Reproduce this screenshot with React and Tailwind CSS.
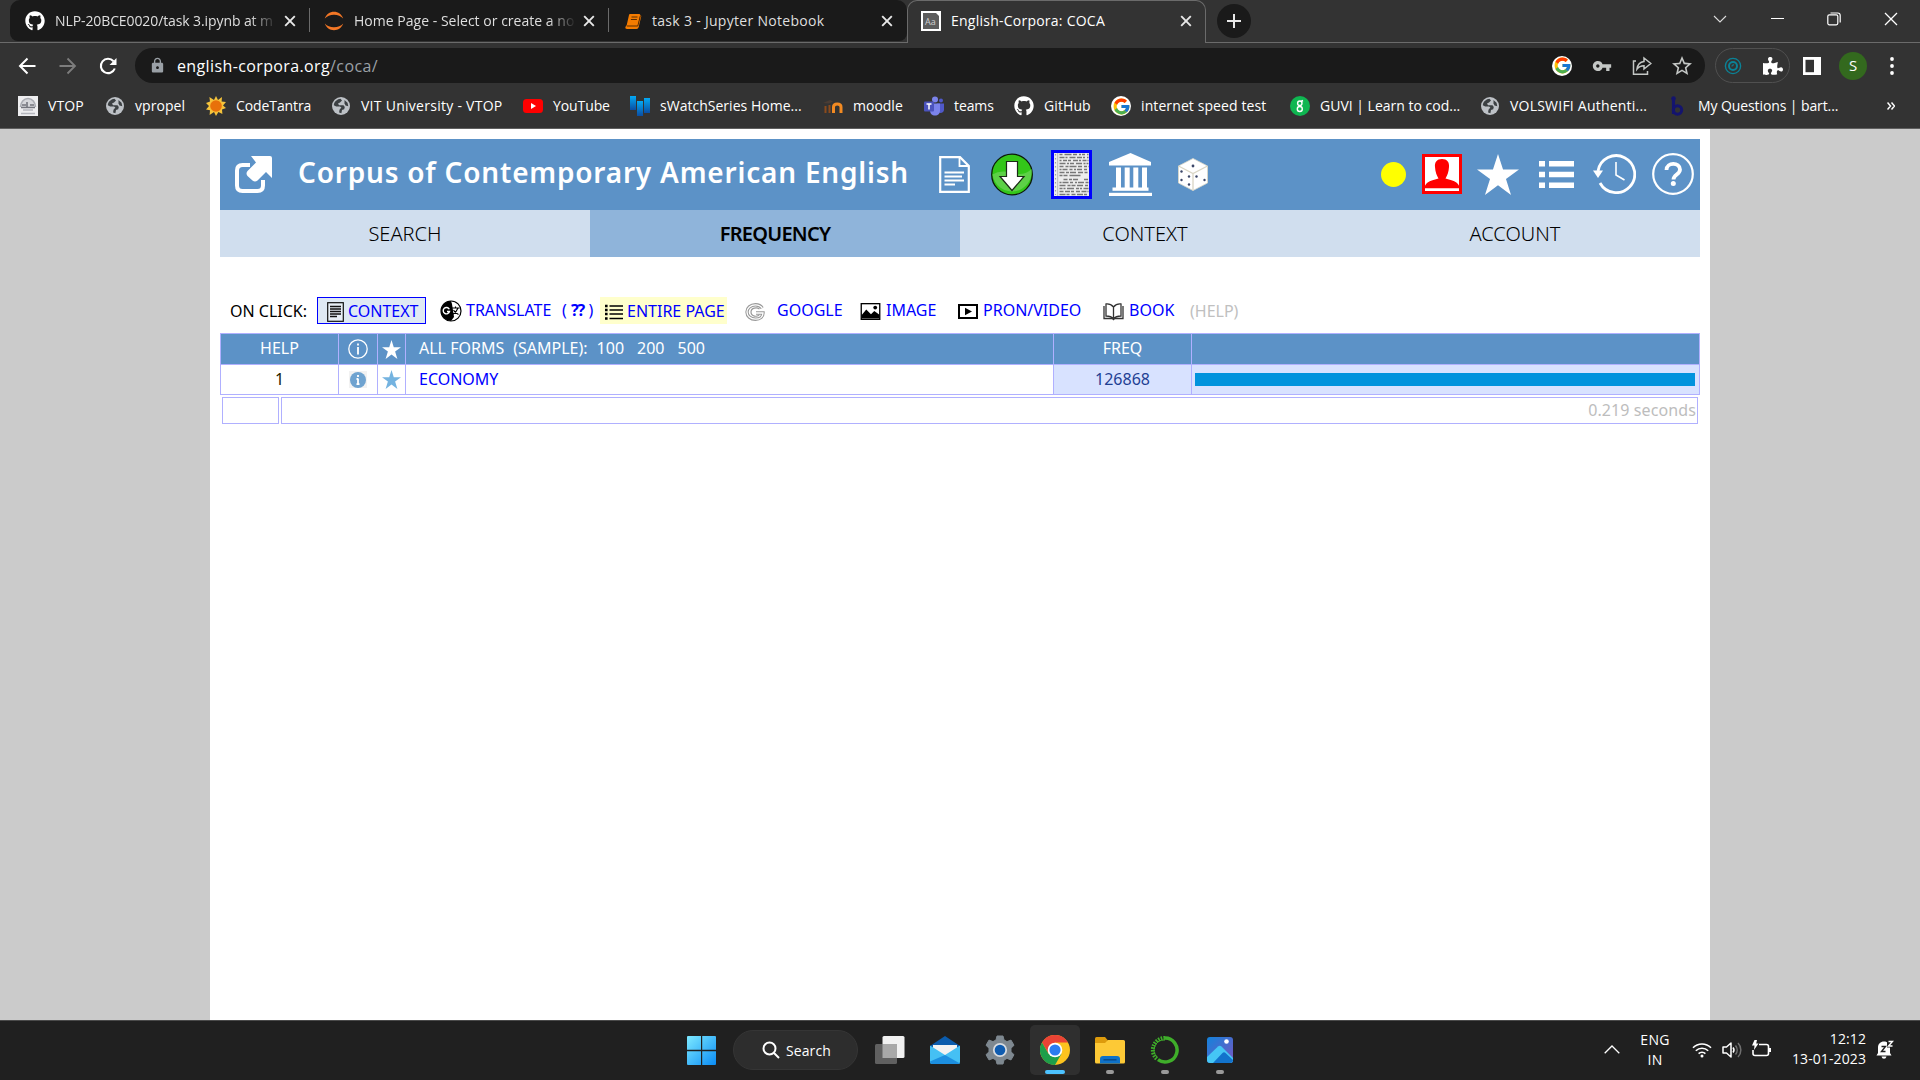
import React from 'react';
import { FaGithub, FaPuzzlePiece } from 'react-icons/fa';
import { FcGoogle } from 'react-icons/fc';
import { MdVpnKey, MdLock, MdStarBorder } from 'react-icons/md';

const STAR = 'M50 0 L62 38 L100 38 L69 61 L81 100 L50 76 L19 100 L31 61 L0 38 L38 38 Z';

function Globe() {
  return (
    <svg viewBox="0 0 20 20" className="w-5 h-5">
      <circle cx="10" cy="10" r="9" fill="#bdc1c6" />
      <path d="M2.800 9.200C3.200 5.500 6.300 3 9.500 2.800L11 4.500 9 6.500 7 7.500l1 1.700h4.500l1.300 1.800-.6 2.200-2.200.8-.6 3.200-2.300-.6.4-2.800 1.900-2.200-1.400-1.200H5.200Z" fill="#3c4043" />
      <path d="M13.500 4l3 2.800.8 3.400-2.800-.7-1-2.200Z" fill="#3c4043" />
    </svg>
  );
}

function GoogleBadge() {
  return (
    <span className="flex w-5 h-5 items-center justify-center rounded-full bg-white">
      <FcGoogle size={19} />
    </span>
  );
}

function CloseX({ className = '' }) {
  return (
    <svg viewBox="0 0 12 12" className={'w-3 h-3 shrink-0 ' + className} stroke="#e8e8e8" strokeWidth="1.9">
      <path d="M1.200 1.200L10.800 10.800M10.800 1.200L1.200 10.800" />
    </svg>
  );
}

function NotebookIcon() {
  return (
    <svg viewBox="0 0 20 20" className="w-5 h-5 shrink-0">
      <path d="M7 3h9q1.500 0 1.200 1.300L14.800 15H3.500L6 4Q6.200 3 7 3Z" fill="#f57c00" />
      <path d="M3.500 14.500h11.300l2.700-10.500.8 1-2.600 11Q15.300 18 13.500 18H4Q2 18 2.300 16Z" fill="#f57c00" />
      <path d="M8.500 6h6M7.900 8.500h6M3.800 15h11l2.600-10.200" stroke="#5a2c00" strokeWidth="1" fill="none" />
    </svg>
  );
}

function TabStrip() {
  return (
    <div className="flex h-[43px] bg-[#333333]">
      <div className="flex h-full w-[907px] shrink-0 border-b border-[#6b6b6b]">
        <div className="ml-[10px] flex h-[41px] w-[897px] rounded-t-[10px] rounded-b-[8px] bg-[#1a1a1a]">
          <div className="flex w-[299px] shrink-0 items-center border-r border-transparent">
            <FaGithub size={20} color="#fff" className="ml-[15px] shrink-0" />
            <span className="ml-[10px] w-[222px] shrink-0 overflow-hidden whitespace-nowrap text-[14px] tracking-[-0.1px] text-[#dfdfdf] [mask-image:linear-gradient(to_right,black_195px,transparent_222px)]">
              NLP-20BCE0020/task 3.ipynb at m
            </span>
            <CloseX className="ml-[7px]" />
          </div>
          <div className="mt-2 h-6 w-px shrink-0 bg-[#6b6b6b]" />
          <div className="flex w-[298px] shrink-0 items-center">
            <svg viewBox="0 0 20 20" className="ml-[14px] h-5 w-5 shrink-0">
              <path d="M.8 7.500C2.200 3.300 5.800.8 10 .8s7.800 2.500 9.200 6.700C17 5 13.800 3.700 10 3.700S3 5 .8 7.500Z" fill="#f37726" />
              <path d="M.8 12.500c1.400 4.200 5 6.700 9.200 6.700s7.800-2.500 9.200-6.700c-2.200 2.500-5.400 3.800-9.200 3.800S3 15 .8 12.500Z" fill="#f37726" />
            </svg>
            <span className="ml-[10px] w-[222px] shrink-0 overflow-hidden whitespace-nowrap text-[14px] tracking-[0.02px] text-[#dfdfdf] [mask-image:linear-gradient(to_right,black_195px,transparent_222px)]">
              Home Page - Select or create a no
            </span>
            <CloseX className="ml-[7px]" />
          </div>
          <div className="mt-2 h-6 w-px shrink-0 bg-[#6b6b6b]" />
          <div className="flex w-[297px] shrink-0 items-center">
            <span className="ml-[14px]"><NotebookIcon /></span>
            <span className="ml-[9px] w-[222px] whitespace-nowrap text-[14px] tracking-[0.3px] text-[#dfdfdf]">task 3 - Jupyter Notebook</span>
            <CloseX className="ml-[7px]" />
          </div>
        </div>
      </div>
      <div className="flex h-[43px] w-[299px] shrink-0 items-center rounded-t-[10px] border border-b-0 border-[#6b6b6b] pb-[3px]">
        <svg viewBox="0 0 20 20" className="ml-[13px] h-5 w-5 shrink-0">
          <rect width="20" height="20" fill="#fff" />
          <path d="M2 2h13l3 3v13H2Z" fill="#5c5c5c" />
          <text x="4" y="14" fontSize="9" fill="#d0d0d0">Aa</text>
        </svg>
        <span className="ml-[10px] w-[229px] whitespace-nowrap text-[14px] tracking-[0.24px] text-white">English-Corpora: COCA</span>
        <CloseX />
      </div>
      <div className="flex h-full grow border-b border-[#6b6b6b]">
        <div className="ml-[11px] mt-[4px] flex h-[34px] w-[34px] items-center justify-center rounded-full bg-[#1a1a1a]">
          <svg viewBox="0 0 16 16" className="h-4 w-4" stroke="#e8e8e8" strokeWidth="2">
            <path d="M8 1v14M1 8h14" />
          </svg>
        </div>
        <svg viewBox="0 0 14 8" className="ml-[462px] mt-[15px] h-2 w-[14px]" fill="none" stroke="#ddd" strokeWidth="1.100">
          <path d="M1 1l6 6 6-6" />
        </svg>
        <div className="ml-[44px] mt-[18px] h-px w-[13px] bg-white" />
        <svg viewBox="0 0 14 14" className="ml-[43px] mt-[12px] h-[14px] w-[14px]" fill="none" stroke="#fff" strokeWidth="1.200">
          <rect x=".8" y="2.800" width="10" height="10" rx="1.500" />
          <path d="M3.500 1h7.200c1.500 0 2.500 1 2.500 2.500v7" />
        </svg>
        <svg viewBox="0 0 14 14" className="ml-[43px] mt-[12px] h-[14px] w-[14px]" stroke="#fff" strokeWidth="1.300">
          <path d="M1 1l12 12M13 1L1 13" />
        </svg>
      </div>
    </div>
  );
}

function Toolbar() {
  return (
    <div className="flex h-[45px] items-center bg-[#333333]">
      <svg viewBox="0 0 18 18" className="ml-[18px] h-[18px] w-[18px]" fill="none" stroke="#fff" strokeWidth="2">
        <path d="M17.500 9H2M9.500 1.500L2 9l7.500 7.500" />
      </svg>
      <svg viewBox="0 0 18 18" className="ml-[23px] h-[18px] w-[18px]" fill="none" stroke="#7d7d7d" strokeWidth="1.800">
        <path d="M.5 9H16M8.500 1.500L16 9l-7.500 7.500" />
      </svg>
      <svg viewBox="0 0 18 18" className="ml-[22px] h-[18px] w-[18px]" fill="none" stroke="#fff" strokeWidth="2.100">
        <path d="M15.800 11.500A7.200 7.200 0 1 1 14.500 4.200" />
        <path d="M17.500 1v7h-7Z" fill="#fff" stroke="none" />
      </svg>
      <div className="ml-[18px] flex h-[35px] w-[1570px] items-center rounded-full bg-[#1a1a1a]">
        <MdLock size={17} color="#9aa0a6" className="ml-[14px]" />
        <div className="ml-[11px] w-[1375px] whitespace-nowrap text-[16px] tracking-[0.38px] text-white">
          english-corpora.org<span className="text-[#9aa0a6]">/coca/</span>
        </div>
        <GoogleBadge />
        <MdVpnKey size={20} color="#c4c7c5" className="ml-[20px]" />
        <svg viewBox="0 0 20 20" className="ml-[20px] h-5 w-5" fill="none" stroke="#c4c7c5" strokeWidth="1.500">
          <path d="M4 5H1.500v13.200h14V15" />
          <path d="M12 2l6.800 5.500L12 13v-3.300c-3 0-5.300 1-7 3.300.5-4 3-7 7-7.500Z" />
        </svg>
        <MdStarBorder size={24} color="#c4c7c5" className="ml-[18px]" />
      </div>
      <div className="ml-[10px] flex h-[35px] w-[75px] items-center rounded-full border border-[#505050]">
        <svg viewBox="0 0 18 18" className="ml-[8px] h-[18px] w-[18px]" fill="none" stroke="#0b8296" strokeWidth="1.400">
          <circle cx="9" cy="9" r="7.600" />
          <circle cx="9" cy="9" r="4" strokeWidth="2" />
          <path d="M8 9.500q0-2 2-1.500" strokeWidth="1.200" />
        </svg>
        <FaPuzzlePiece size={20} color="#fff" className="ml-[21px]" />
      </div>
      <svg viewBox="0 0 18 18" className="ml-[13px] h-[18px] w-[18px]">
        <rect width="18" height="18" fill="#fff" />
        <rect x="2.500" y="2.800" width="8.500" height="12.400" fill="#333" />
      </svg>
      <div className="ml-[18px] flex h-7 w-7 items-center justify-center rounded-full bg-[#33691e] text-[15px] text-white">S</div>
      <svg viewBox="0 0 4 18" className="ml-[23px] h-[18px] w-1" fill="#fff">
        <circle cx="2" cy="2" r="1.900" />
        <circle cx="2" cy="9" r="1.900" />
        <circle cx="2" cy="16" r="1.900" />
      </svg>
    </div>
  );
}

function Mark({ icon, label, className }) {
  return (
    <div className={'flex shrink-0 items-center ' + className}>
      <span className="flex h-5 w-5 shrink-0 items-center justify-center">{icon}</span>
      <span className="ml-[10px] mt-[-2px] whitespace-nowrap">{label}</span>
    </div>
  );
}

function BookmarksBar() {
  return (
    <div className="flex h-[41px] items-center border-b border-[#5f5f5f] bg-[#333333] pb-[4px] pl-[18px] text-[14px] tracking-[-0.1px] text-white">
      <Mark className="w-[87px] tracking-[0.1px]" label="VTOP" icon={
        <svg viewBox="0 0 20 20" className="h-5 w-5">
          <rect width="20" height="20" fill="#eeeef0" />
          <path d="M2.500 11A7.500 8.500 0 0 1 17.500 11" fill="#d6d7db" stroke="#aaacb3" strokeWidth="1.600" />
          <path d="M3 11.500h14M4 9h4M9 6v5M12 9h4" stroke="#74767e" strokeWidth="1.600" />
          <path d="M5 14h10M3 17.500h14" stroke="#b5b6bd" strokeWidth="1.600" />
        </svg>} />
      <Mark className="w-[101px] tracking-[0.05px]" label="vpropel" icon={<Globe />} />
      <Mark className="w-[125px]" label="CodeTantra" icon={
        <svg viewBox="0 0 20 20" className="h-5 w-5">
          <path d="M10 0l2 4 4-3-.4 4.600L20 6l-3 3.500 3 2.500-4 1.600.4 4.400-4-2L10 20l-2-4-4.400 3 .4-4.800-4-.8L3 10 0 7l4-1.400L3.400 1 8 4Z" fill="#f5c33b" />
          <circle cx="10" cy="10" r="5.800" fill="#e8710a" />
        </svg>} />
      <Mark className="w-[192px] tracking-[0.27px]" label="VIT University - VTOP" icon={<Globe />} />
      <Mark className="w-[107px]" label="YouTube" icon={
        <svg viewBox="0 0 20 20" className="h-5 w-5">
          <rect y="3" width="20" height="14" rx="3.500" fill="#f00" />
          <path d="M8 7l5 3-5 3Z" fill="#fff" />
        </svg>} />
      <Mark className="w-[193px] tracking-[0.02px]" label="sWatchSeries Home..." icon={
        <svg viewBox="0 0 20 20" className="h-5 w-5">
          <defs>
            <linearGradient id="bars" x1="0" y1="0" x2="0" y2="1">
              <stop offset="0" stopColor="#03a9f4" />
              <stop offset="1" stopColor="#0a4da3" />
            </linearGradient>
          </defs>
          <rect width="6" height="14" fill="url(#bars)" />
          <rect x="7" y="5" width="6" height="15" fill="url(#bars)" />
          <rect x="14" y="2" width="6" height="15" fill="url(#bars)" />
        </svg>} />
      <Mark className="w-[101px] tracking-[0px]" label="moodle" icon={
        <svg viewBox="0 0 20 20" className="h-5 w-5" fill="none">
          <path d="M2.500 17V10M6.500 17V9" stroke="#8a4a1c" strokeWidth="2" />
          <path d="M0 7l7-3 3 1.500-4 2Z" fill="#4a3c34" />
          <path d="M10.500 17v-6c0-4 7.500-4 7.500 0v6" stroke="#f28a22" strokeWidth="3" />
        </svg>} />
      <Mark className="w-[90px]" label="teams" icon={
        <svg viewBox="0 0 20 20" className="h-5 w-5">
          <circle cx="11" cy="3.500" r="3" fill="#7b83eb" />
          <circle cx="17" cy="4.500" r="2" fill="#5059c9" />
          <path d="M13 7.500h7v6c0 2-1.500 3.500-3.500 3.500S13 16 13 13Z" fill="#5059c9" />
          <path d="M6 7.500h10v7c0 3-2 5-5 5s-5-2-5-5Z" fill="#7b83eb" />
          <rect y="5.500" width="10" height="10" rx="1" fill="#4b53bc" />
          <path d="M2.500 8h5M5 8v5.500" stroke="#fff" strokeWidth="1.500" />
        </svg>} />
      <Mark className="w-[97px] tracking-[0.1px]" label="GitHub" icon={<FaGithub size={20} color="#fff" />} />
      <Mark className="w-[179px] tracking-[0.1px]" label="internet speed test" icon={<GoogleBadge />} />
      <Mark className="w-[190px] tracking-[0px]" label="GUVI | Learn to cod..." icon={
        <svg viewBox="0 0 20 20" className="h-5 w-5" fill="none">
          <circle cx="10" cy="10" r="10" fill="#0fb651" />
          <circle cx="9.800" cy="7.200" r="2.200" stroke="#fff" strokeWidth="1.400" />
          <circle cx="9.800" cy="13" r="2.500" stroke="#fff" strokeWidth="1.400" />
          <path d="M11 5.500l2-1" stroke="#fff" strokeWidth="1.400" />
        </svg>} />
      <Mark className="w-[188px] tracking-[0.22px]" label="VOLSWIFI Authenti..." icon={<Globe />} />
      <Mark className="w-[215px]" label="My Questions | bart..." icon={
        <svg viewBox="0 0 20 20" className="h-5 w-5" fill="none">
          <circle cx="5.500" cy="2.500" r="2.300" fill="#14146e" />
          <path d="M5.500 3v15" stroke="#14146e" strokeWidth="3.200" />
          <circle cx="9.500" cy="14" r="4.200" stroke="#14146e" strokeWidth="3" />
        </svg>} />
      <svg viewBox="0 0 8 8" className="ml-[4px] h-2 w-2" fill="none" stroke="#fff" strokeWidth="1.500">
        <path d="M.5.5L3.500 4l-3 3.500M4.500.5L7.500 4l-3 3.500" />
      </svg>
    </div>
  );
}

function NewspaperIcon() {
  const rows = [
    [1, '3 2 7 1.500 4 2 2 1'],
    [4, '5 1 2 2 6 1.500'],
    [7, '2 1.500 4 1 3 2 5 1'],
    [10, '6 1.500 2 1 4 2'],
    [13, '4 2 3 1 7 1.500'],
    [16, '2 1 5 2 3 1.500'],
    [19, '5 1.500 3 1 6 2'],
    [22, '3 1 4 2 11 40'],
    [26, '0 4 4 1.500 3 1 5 2'],
    [29, '2 1 6 1.500 3 2'],
    [32, '6 2 3 1 4 1.500'],
    [35, '3 1 2 1.500 7 2'],
    [38, '4 1.500 5 1 3 2'],
    [41, '6 1 3 2 4 1.500'],
  ];
  return (
    <svg viewBox="0 0 35 43" className="h-[43px] w-[35px]" fill="none">
      <rect width="35" height="43" fill="#ececec" />
      {rows.map(([y, dash]) => (
        <path key={y} d={`M5.500 ${y + 0.5}H34.500`} stroke="#777" strokeWidth="1.500" strokeDasharray={dash} />
      ))}
      <path d="M1.500 1v41" stroke="#a0a0a0" strokeWidth="1.200" strokeDasharray="1.500 2.500" />
      <path d="M3.700 0v43" stroke="#9a9a9a" strokeWidth=".6" />
    </svg>
  );
}

function SiteHeader() {
  return (
    <div className="flex h-[71px] items-center bg-[#5c92c7]">
      <svg viewBox="0 0 37 37" className="ml-[15px] h-[37px] w-[37px] shrink-0">
        <path d="M15 9H7.500Q2 9 2 14.500v15Q2 35 7.500 35h15q5.500 0 5.500-5.500V24" fill="none" stroke="#fff" strokeWidth="4" />
        <path d="M16 0h19q2 0 2 2v20l-6-6-8.500 8.500q-2.500 2-5 0L12.500 20q-2-2.500 0-5L21 6.500Z" fill="#fff" />
      </svg>
      <div className="ml-[26px] mt-[-5px] w-[618px] shrink-0 whitespace-nowrap text-[28px] leading-[40px] font-semibold tracking-[0.79px] text-white [font-family:'Noto_Sans','Open_Sans',sans-serif]">
        Corpus of Contemporary American English
      </div>
      <div className="ml-[23px] flex shrink-0 items-center">
        <svg viewBox="0 0 31 37" className="h-[37px] w-[31px]" fill="none" stroke="#fff">
          <path d="M1.200 1.200H21L29.800 10v25.800H1.200Z" strokeWidth="2.200" />
          <path d="M20.500 1.500V10h9" strokeWidth="1.800" />
          <path d="M5.500 16.500H25M5.500 20.500H23M5.500 24.500H25M5.500 28.500H16" strokeWidth="1.900" />
        </svg>
        <svg viewBox="0 0 42 42" className="ml-[21px] h-[43px] w-[42px]">
          <circle cx="21" cy="21" r="20.300" fill="#33c619" stroke="#0b1a08" strokeWidth="1.300" />
          <path d="M1.500 21q8-5 20-1.500t19-4A19.600 19.600 0 1 1 1.500 21Z" fill="#5dd047" />
          <path d="M15.500 8h11v15H33L21 37 9 23h6.500Z" fill="#fff" stroke="#1b2a16" strokeWidth="1.200" />
        </svg>
        <div className="ml-[18px] border-[3px] border-[#0000ff]">
          <NewspaperIcon />
        </div>
        <svg viewBox="0 0 43 43" className="ml-[17px] h-[43px] w-[43px]" fill="#fff">
          <path d="M21.500 0L42 9v3.500H0V9Z" />
          <path d="M7 14.500h5V35H7ZM15.700 14.500h5V35h-5ZM24.300 14.500h5V35h-5ZM33 14.500h5V35h-5Z" />
          <rect x="3.500" y="34.500" width="36" height="3.300" />
          <rect y="39.800" width="43" height="3.200" />
        </svg>
        <svg viewBox="0 0 30 33" className="ml-[26px] h-[33px] w-[30px]">
          <path d="M15 .5L29.500 8v17L15 32.500.5 25V8Z" fill="#fff" stroke="#ddd9c8" strokeWidth=".8" />
          <path d="M.5 8L15 15.500 29.500 8M15 15.500v17" fill="none" stroke="#d9d5c4" strokeWidth="1.300" />
          <g fill="#3b4668">
            <circle cx="15" cy="8" r="1.400" />
            <circle cx="3.500" cy="13.500" r="1.200" /><circle cx="11" cy="18.500" r="1.200" />
            <circle cx="3.500" cy="22" r="1.200" /><circle cx="11" cy="26.500" r="1.200" />
            <circle cx="18.500" cy="18.500" r="1.200" /><circle cx="26.500" cy="22" r="1.200" />
          </g>
        </svg>
      </div>
      <div className="ml-[173px] mt-[-1px] flex shrink-0 items-center">
        <div className="h-[25px] w-[25px] rounded-full bg-[#ffff00]" />
        <svg viewBox="0 0 40 40" className="ml-[16px] h-10 w-10">
          <rect width="40" height="40" fill="#f00" />
          <rect x="3" y="3" width="34" height="34" fill="#fff" />
          <path d="M20 5c5 0 7.500 3 7 8-.2 5-2 9-3.500 11.500l6 1.800c4 1.200 6.500 3 7.500 5.500v2.400H3v-2.400c1-2.500 3.500-4.300 7.500-5.500l6-1.800C15 22 13.200 18 13 13c-.5-5 2-8 7-8Z" fill="#f00" />
        </svg>
        <svg viewBox="0 0 100 100" preserveAspectRatio="none" className="ml-[15px] h-[41px] w-[42px]" fill="#fff">
          <path d={STAR} />
        </svg>
        <svg viewBox="0 0 35 27" className="ml-[20px] h-[27px] w-[35px]" fill="#fff">
          <path d="M0 0h6v5.500H0ZM0 10.800h6v5.500H0ZM0 21.500h6V27H0ZM10 0h25v5.500H10ZM10 10.800h25v5.500H10ZM10 21.500h25V27H10Z" />
        </svg>
        <svg viewBox="0 0 43 40" className="ml-[19px] h-10 w-[43px]" fill="none" stroke="#fff">
          <path d="M5 17A18.500 18.500 0 1 1 7 29" strokeWidth="2.800" />
          <path d="M23 8v13l8.500 5" strokeWidth="1.600" />
          <path d="M0 16.500h10L5 24Z" fill="#fff" stroke="none" />
        </svg>
        <svg viewBox="0 0 42 42" className="ml-[16px] h-[42px] w-[42px]" fill="none" stroke="#fff">
          <circle cx="21" cy="21" r="19.800" strokeWidth="2.200" />
          <path d="M14.500 17c0-8 13.500-8 13.500-.5 0 5-6.500 5-6.500 10" strokeWidth="3.800" />
          <circle cx="21.300" cy="30.500" r="2.500" fill="#fff" stroke="none" />
        </svg>
      </div>
    </div>
  );
}

function NavTabs() {
  return (
    <div className="grid h-[47px] grid-cols-4 bg-[#d0deee] text-center text-[20px] leading-[47px] text-black [font-weight:350]">
      <div>SEARCH</div>
      <div className="bg-[#8fb4da] font-semibold tracking-[-0.75px]">FREQUENCY</div>
      <div>CONTEXT</div>
      <div>ACCOUNT</div>
    </div>
  );
}

function ClickRow() {
  return (
    <div className="mt-[40px] flex h-[27px] items-center whitespace-nowrap pl-[10px] text-[16px] leading-[27px] text-[#0000ff] [font-weight:380]">
      <span className="mt-[2px] w-[87px] shrink-0 text-black">ON CLICK:</span>
      <div className="flex h-[27px] w-[109px] shrink-0 items-center border border-[#0000ff] bg-[#dfe9f4]">
        <svg viewBox="0 0 17 20" className="ml-[9px] mt-[2px] h-5 w-[17px]" fill="none" stroke="#111">
          <rect x=".7" y=".7" width="15.600" height="18.600" strokeWidth="1.200" fill="#e9eff6" />
          <path d="M3 4.500h11M3 7h11M3 9.500h11M3 12h11M3 14.500h7" strokeWidth="1.300" />
        </svg>
        <span className="ml-[4px] mt-[2px]">CONTEXT</span>
      </div>
      <svg viewBox="0 0 22 22" className="ml-[14px] h-[22px] w-[22px] shrink-0" fill="none">
        <circle cx="11" cy="11" r="10" fill="#fff" stroke="#000" strokeWidth="1.200" />
        <path d="M11 1a10 10 0 0 0 0 20l3-4-2-13Z" fill="#000" />
        <path d="M9.300 9.300A3.200 3.200 0 1 0 9.500 11.500H7" stroke="#fff" strokeWidth="1.400" />
        <path d="M11.500 8h8M15.500 6.500V8M18 8c-1 3-3 5-5.500 6.500M13.500 10c1 2 3 3.500 5 4.500" stroke="#000" strokeWidth="1.100" />
      </svg>
      <span className="ml-[4px] w-[96px] shrink-0">TRANSLATE</span>
      <span className="w-[38px] shrink-0">( <b className="tracking-[-1px]">??</b> )</span>
      <div className="flex h-[27px] w-[127px] shrink-0 items-center bg-[#ffffcc]">
        <svg viewBox="0 0 18 16" className="ml-[5px] mt-[3px] h-4 w-[18px] shrink-0" fill="none" stroke="#000">
          <path d="M4.500 2H18M4.500 6H18M4.500 10H18M4.500 14.500H18" strokeWidth="1.300" />
          <path d="M0 2h2.600M0 6h2.600M0 10h2.600M0 14.500h2.600" strokeWidth="2.600" />
        </svg>
        <span className="ml-[4px] mt-[2px]">ENTIRE PAGE</span>
      </div>
      <svg viewBox="0 0 20 18" className="ml-[18px] mt-[2px] h-[18px] w-5 shrink-0" fill="none">
        <path d="M17.200 5.200C15.500 2.500 13 1.800 10.500 1.800 5.500 1.800 2 5 2 9s3.500 7.200 8.500 7.200c4.500 0 7.500-2.500 7.500-6.200h-7" stroke="#999" strokeWidth="3.400" />
        <path d="M17.200 5.200C15.500 2.500 13 1.800 10.500 1.800 5.500 1.800 2 5 2 9s3.500 7.200 8.500 7.200c4.500 0 7.500-2.500 7.500-6.200h-7" stroke="#fff" strokeWidth="1.300" />
        <path d="M14.500 6C12 4 6 4.500 6 9s6.500 5.500 8.500 2.500" stroke="#999" strokeWidth="1.200" />
      </svg>
      <span className="ml-[12px] w-[83px] shrink-0">GOOGLE</span>
      <svg viewBox="0 0 21 18" className="mt-[2px] h-[17px] w-[21px] shrink-0">
        <rect x=".7" y=".7" width="19.600" height="16.600" fill="#fff" stroke="#000" strokeWidth="1.400" />
        <path d="M1 16.500V13l5-6 5 5 3.500-3.500L20 12.500v4Z" fill="#000" />
        <circle cx="15.500" cy="4.800" r="2" fill="#000" />
      </svg>
      <span className="ml-[5px] w-[72px] shrink-0">IMAGE</span>
      <svg viewBox="0 0 20 15" className="mt-[2px] h-[15px] w-5 shrink-0">
        <rect x="1" y="1" width="18" height="13" fill="#fff" stroke="#000" strokeWidth="2" />
        <path d="M7 3.800L14 7.500 7 11.200Z" fill="#000" />
      </svg>
      <span className="ml-[5px] w-[120px] shrink-0">PRON/VIDEO</span>
      <svg viewBox="0 0 21 18" className="mt-[2px] h-[18px] w-[21px] shrink-0" fill="#fff" stroke="#333" strokeWidth="1.300">
        <path d="M1 3v12.500h8.500l1 1 1-1H20V3" />
        <path d="M10.500 4C8 1 5 .8 3 1v12c3 0 5.500.5 7.500 3 2-2.500 4.500-3 7.500-3V1c-2-.2-5 0-7.500 3Zm0 0v12" />
      </svg>
      <span className="ml-[5px] w-[61px] shrink-0">BOOK</span>
      <span className="mt-[2px] text-[#c0c0c0]">(HELP)</span>
    </div>
  );
}

function ResultsTable() {
  return (
    <div className="mt-[9px] text-[16px] [font-weight:380]">
      <div className="grid grid-cols-[117px_38px_27px_647px_137px_507px] gap-px border border-[#b0b0ff] bg-[#b0b0ff] p-0 leading-[28px] whitespace-nowrap">
        <div className="h-[30px] bg-[#5c92c7] text-center text-white">HELP</div>
        <div className="flex items-center justify-center bg-[#5c92c7]">
          <svg viewBox="0 0 20 20" className="h-5 w-5" fill="none" stroke="#fff">
            <circle cx="10" cy="10" r="9.200" strokeWidth="1.300" />
            <path d="M10 8v7.500M10 4.500v2" strokeWidth="1.800" />
          </svg>
        </div>
        <div className="flex items-center justify-center bg-[#5c92c7]">
          <svg viewBox="0 0 100 100" className="mt-px h-[19px] w-[19px]" fill="#fff"><path d={STAR} /></svg>
        </div>
        <div className="bg-[#5c92c7] pl-[13px] text-white">
          <span className="mr-[9px]">ALL FORMS</span>
          <span className="mr-[9px]">(SAMPLE):</span>
          <span className="mr-[13px]">100</span>
          <span className="mr-[13px]">200</span>
          <span>500</span>
        </div>
        <div className="bg-[#5c92c7] text-center text-white">FREQ</div>
        <div className="bg-[#5c92c7]" />
        <div className="h-[29px] bg-white text-center leading-[29px] text-[#222200]">1</div>
        <div className="flex items-center justify-center bg-white">
          <span className="flex h-[17px] w-[18px] items-center justify-center bg-[#f2f2f2]">
            <svg viewBox="0 0 16 16" className="h-4 w-4">
              <circle cx="8" cy="8" r="8" fill="#6fa3d0" />
              <path d="M8 6.500V12M6.500 7H8M6.500 12.200h3M8 3v2" stroke="#fff" strokeWidth="1.800" />
            </svg>
          </span>
        </div>
        <div className="flex items-center justify-center bg-white">
          <svg viewBox="0 0 100 100" className="h-[19px] w-[19px]" fill="#74b3e0"><path d={STAR} /></svg>
        </div>
        <div className="bg-white pl-[13px] leading-[29px] text-[#0000ff]">ECONOMY</div>
        <div className="bg-[#d8e2ff] text-center leading-[29px] text-[#1f3f94]">126868</div>
        <div className="flex items-center bg-[#d8e2ff] pl-[3px]">
          <div className="h-[13px] w-[500px] bg-[#0093dd]" />
        </div>
      </div>
      <div className="mt-[2px] ml-[2px] flex h-[27px] gap-[2px]">
        <div className="w-[57px] border border-[#b0b0ff]" />
        <div className="w-[1417px] border border-[#b0b0ff] pr-[1px] text-right leading-[25px] tracking-[0.1px] text-[#bdbdbd]">0.219 seconds</div>
      </div>
    </div>
  );
}

function TaskIcon({ children, running, active }) {
  return (
    <div className={'flex h-[50px] w-[50px] shrink-0 flex-col items-center rounded-[5px] ' + (active ? 'bg-[#2f2f2f]' : '')}>
      <div className="flex h-[45px] items-center pb-[5px] pt-[10px]">{children}</div>
      {running && <div className={active ? 'h-1 w-5 rounded-full bg-[#4cc2ff]' : 'h-1 w-2 rounded-full bg-[#9a9a9a]'} />}
    </div>
  );
}

function Taskbar() {
  return (
    <div className="flex h-[60px] border-t border-[#4a4a4a] bg-[#202020] pt-[4px]">
      <svg viewBox="0 0 29 29" className="ml-[687px] mt-[11px] h-[29px] w-[29px] shrink-0">
        <defs>
          <linearGradient id="win" x1="0" y1="0" x2="1" y2="1">
            <stop offset="0" stopColor="#7eeaff" />
            <stop offset="1" stopColor="#0a8cf5" />
          </linearGradient>
        </defs>
        <path d="M1 0h13v13.800H0V1Q0 0 1 0ZM15.200 0H28q1 0 1 1v12.800H15.200ZM0 15.200h14V29H1q-1 0-1-1ZM15.200 15.200H29V28q0 1-1 1H15.200Z" fill="url(#win)" />
      </svg>
      <div className="ml-[17px] mt-[5px] flex h-10 w-[125px] shrink-0 items-center rounded-full border border-[#353535] bg-[#2d2d2d]">
        <svg viewBox="0 0 18 18" className="ml-[28px] h-[18px] w-[18px]" fill="none" stroke="#fff" strokeWidth="2">
          <circle cx="7.500" cy="7.500" r="6" />
          <path d="M12 12l5 5" />
        </svg>
        <span className="ml-[6px] text-[14px] tracking-[0.1px] text-white">Search</span>
      </div>
      <div className="ml-[7px] flex gap-[5px]">
        <TaskIcon>
          <svg viewBox="0 0 30 30" className="h-[30px] w-[30px]">
            <rect x="7.500" y="1" width="22" height="22" rx="1.500" fill="#f1f1f1" />
            <rect y="9" width="22" height="20" rx="1.500" fill="#606060" />
            <path d="M7.500 9H22v14H7.500Z" fill="#a8a8a8" />
          </svg>
        </TaskIcon>
        <TaskIcon>
          <svg viewBox="0 0 30 30" className="h-[30px] w-[30px]">
            <path d="M0 11L15 1l15 10v5H0Z" fill="#0b5cad" />
            <path d="M3 10h24v8L15 24 3 17Z" fill="#f2f2f2" />
            <path d="M0 10.500L15 20l15-9.500V27q0 2-2 2H2q-2 0-2-2Z" fill="#45c0f4" />
            <path d="M15 20L30 28.500q-.6.500-2 .5H2q-2 0-2-2v-.5Z" fill="#1c8fe0" />
          </svg>
        </TaskIcon>
        <TaskIcon>
          <svg viewBox="0 0 30 30" className="h-[30px] w-[30px]">
            <path d="M12 1h6l1 4 3 1.600 4-1.500 3 5.200-3 2.900v3.600l3 2.900-3 5.200-4-1.500-3 1.600-1 4h-6l-1-4-3-1.600-4 1.500-3-5.200 3-2.900v-3.600l-3-2.900 3-5.200 4 1.500L11 5Z" fill="#7e8890" stroke="#7e8890" strokeWidth="1" strokeLinejoin="round" />
            <circle cx="15" cy="15" r="6.200" fill="#0f5cb0" stroke="#d7dbe0" strokeWidth="1.800" />
          </svg>
        </TaskIcon>
        <TaskIcon running active>
          <svg viewBox="0 0 30 30" className="h-[30px] w-[30px]">
            <circle cx="15" cy="15" r="15" fill="#fcc31e" />
            <path d="M2 7.500A15 15 0 0 1 28 7.500H15L8.500 18.500Z" fill="#ea4335" />
            <path d="M2 7.500L8.500 18.800 21.500 18.800 15 30A15 15 0 0 1 2 7.500Z" fill="#1e9e4a" />
            <circle cx="15" cy="15" r="7.300" fill="#fff" />
            <circle cx="15" cy="15" r="5.600" fill="#2b7cf0" />
          </svg>
        </TaskIcon>
        <TaskIcon running>
          <svg viewBox="0 0 30 30" className="h-[30px] w-[30px]">
            <path d="M0 8V3.500Q0 2 1.500 2H10l3 3.500V9H0Z" fill="#dd9b0c" />
            <path d="M0 8h10l3-3h15.500Q30 5 30 6.500V27q0 1.500-1.500 1.500h-27Q0 28.500 0 27Z" fill="#fdc936" />
            <path d="M5 28.500V24q0-3 3-3h14q3 0 3 3v4.500Z" fill="#0f72c9" />
            <path d="M8.500 24.800h13" stroke="#0a4b8c" strokeWidth="1.500" />
          </svg>
        </TaskIcon>
        <TaskIcon running>
          <svg viewBox="0 0 30 30" className="h-[30px] w-[30px]" fill="none" stroke="#3fae2a">
            <path d="M15 3a12 12 0 1 1-7 21.700" strokeWidth="3.500" />
            <path d="M15 3A12 12 0 0 0 7.500 24.500" strokeWidth="4" strokeDasharray="1.600 1.100" />
            <path d="M15 5A10 10 0 0 0 7 22" strokeWidth="1" />
          </svg>
        </TaskIcon>
        <TaskIcon running>
          <svg viewBox="0 0 30 30" className="h-[30px] w-[30px]">
            <defs>
              <linearGradient id="sky" x1="0" y1="0" x2="1" y2="1">
                <stop offset="0" stopColor="#1283dc" />
                <stop offset="1" stopColor="#7a55c0" />
              </linearGradient>
            </defs>
            <rect x="2" y="2" width="26" height="26" rx="3" fill="url(#sky)" />
            <path d="M2 22L13 11.500q1.800-1.500 3.500 0L28 23v2q0 3-3 3H5q-3 0-3-3Z" fill="#45c6f5" />
            <path d="M8 28L17.500 18q1.500-1.500 3 0L28 25q0 3-3 3Z" fill="#1273cc" />
            <circle cx="21.500" cy="6.500" r="2.300" fill="#fff" />
          </svg>
        </TaskIcon>
      </div>
      <svg viewBox="0 0 16 9" className="ml-[359px] mt-[20px] h-[9px] w-4 shrink-0" fill="none" stroke="#fff" strokeWidth="1.300">
        <path d="M.7 8.300L8 1l7.300 7.300" />
      </svg>
      <div className="ml-[15px] mt-[5px] w-[40px] shrink-0 text-center text-[14px] leading-[20px] tracking-[0.3px] text-white">ENG<br />IN</div>
      <svg viewBox="0 0 20 16" className="ml-[17px] mt-[17px] h-4 w-5 shrink-0" fill="none" stroke="#fff" strokeWidth="1.600">
        <path d="M1 5.800a12.700 12.700 0 0 1 18 0M3.800 8.800a8.800 8.800 0 0 1 12.400 0M6.600 11.600a4.800 4.800 0 0 1 6.800 0" />
        <circle cx="10" cy="14" r="1.500" fill="#fff" stroke="none" />
      </svg>
      <svg viewBox="0 0 20 18" className="ml-[10px] mt-[16px] h-[18px] w-5 shrink-0" fill="none" stroke="#fff" strokeWidth="1.500">
        <path d="M1 6v6h3.500L9 16V2L4.500 6Z" strokeLinejoin="round" />
        <path d="M11 6.500a4 4 0 0 1 0 5" />
        <path d="M13.500 4.500a7 7 0 0 1 0 9M16 2a10 10 0 0 1 0 14" stroke="#6f6f6f" />
      </svg>
      <svg viewBox="0 0 20 18" className="ml-[9px] mt-[15px] h-[18px] w-5 shrink-0" fill="none" stroke="#fff" strokeWidth="1.600">
        <path d="M8 4.500h7.500q2 0 2 2v7q0 2-2 2H4q-2 0-2-2V10" />
        <path d="M19 8v4" strokeWidth="2" />
        <path d="M3.500 0h2.500L5.200 3.500h2.300L3 10l.5-4.500H1Z" fill="#fff" stroke="none" />
      </svg>
      <div className="ml-[15px] mt-[4px] w-[80px] shrink-0 whitespace-nowrap text-right text-[14px] leading-[20px] tracking-[0.1px] text-white">12:12<br />13-01-2023</div>
      <svg viewBox="0 0 18 19" className="ml-[10px] mt-[15px] h-[19px] w-[18px] shrink-0">
        <path d="M2 13V7.500C2 4 4.500 1.500 8 1.500S14 4 14 7.500V13l1.500 2.500H.5ZM5.500 16.500h5q-.5 2.300-2.500 2.300t-2.500-2.300Z" fill="#fff" />
        <path d="M5.500 6.500h4l-4 5h4" fill="none" stroke="#202020" strokeWidth="1.400" />
        <path d="M11 0h7v7.500h-7Z" fill="#202020" />
        <path d="M12.500 1.500h4l-4 4.500h4" fill="none" stroke="#fff" strokeWidth="1.400" />
      </svg>
    </div>
  );
}

export default function App() {
  return (
    <div className="flex h-[1080px] w-[1920px] flex-col overflow-hidden bg-[#cbcbcb] [font-family:'Open_Sans','Noto_Sans',sans-serif]">
      <TabStrip />
      <Toolbar />
      <BookmarksBar />
      <div className="flex grow justify-center">
        <main className="w-[1500px] bg-white px-[10px] pt-[10px] [font-family:'Noto_Sans','Open_Sans',sans-serif]">
          <SiteHeader />
          <NavTabs />
          <ClickRow />
          <ResultsTable />
        </main>
      </div>
      <Taskbar />
    </div>
  );
}
